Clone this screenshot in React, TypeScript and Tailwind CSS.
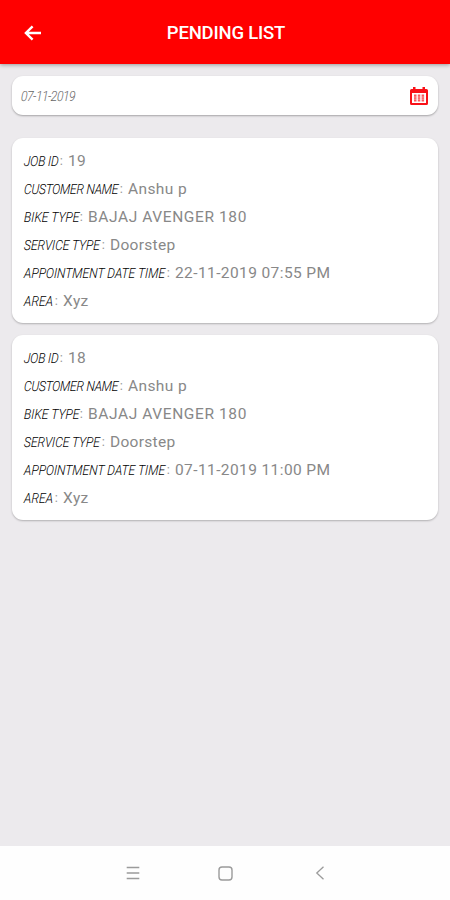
type Job = { id: string; time: string };

const jobs: Job[] = [
  { id: "19", time: "22-11-2019 07:55 PM" },
  { id: "18", time: "07-11-2019 11:00 PM" },
];

function Row({ label, value, slot, squeeze, spread }: { label: string; value: string; slot: string; squeeze: string; spread: string }) {
  return (
    <div className="flex h-7 items-center whitespace-nowrap leading-7">
      <div className={`flex shrink-0 ${slot}`}>
        <span className={`w-0 origin-left -skew-x-3 scale-x-[.87] text-[14px] font-light italic text-black ${squeeze}`}>{label}</span>
        <span className="ml-auto mr-[5px] text-[13px] text-[#999]">:</span>
      </div>
      <span className={`text-[15.5px] text-[#888] ${spread}`}>{value}</span>
    </div>
  );
}

function JobCard({ job }: { job: Job }) {
  return (
    <section className="h-[185px] rounded-[11px] bg-white pl-3 pt-[9px] shadow-[0_1px_2px_rgba(0,0,0,0.25)]">
      <Row label="JOB ID" value={job.id} slot="w-11" squeeze="tracking-[-0.2px]" spread="tracking-[0.4px]" />
      <Row label="CUSTOMER NAME" value="Anshu p" slot="w-26" squeeze="tracking-[-0.3px]" spread="tracking-[0.4px]" />
      <Row label="BIKE TYPE" value="BAJAJ AVENGER 180" slot="w-16" squeeze="tracking-[0px]" spread="tracking-[0.6px]" />
      <Row label="SERVICE TYPE" value="Doorstep" slot="w-[86px]" squeeze="tracking-[-0.1px]" spread="tracking-[0.3px]" />
      <Row label="APPOINTMENT DATE TIME" value={job.time} slot="w-[151px]" squeeze="tracking-[0px]" spread="tracking-[0.4px]" />
      <Row label="AREA" value="Xyz" slot="w-[39px]" squeeze="tracking-[0px]" spread="tracking-[0.4px]" />
    </section>
  );
}

export default function App() {
  return (
    <div className="flex h-[900px] w-[450px] flex-col overflow-hidden bg-[#eceaed] font-[Roboto,sans-serif]">
      <header className="grid h-16 shrink-0 grid-cols-[60px_1fr_60px] items-center bg-[#ff0000] pt-[2px] shadow-[0_1px_4px_rgba(0,0,0,0.35)]">
        <svg className="ml-6" width="18" height="16" viewBox="0 0 18 16" fill="none" stroke="white" strokeWidth="2.4">
          <path d="M8.6 1.3 1.9 8l6.7 6.7M2 8h15" />
        </svg>
        <h1 className="w-[332px] pt-[2px] text-center text-[18.5px] font-medium tracking-[-0.2px] text-white">PENDING LIST</h1>
      </header>
      <main className="flex flex-1 flex-col px-3 pt-3">
        <div className="flex h-[39px] shrink-0 items-center justify-between rounded-[11px] bg-white pl-[9px] pr-[10px] shadow-[0_1px_2px_rgba(0,0,0,0.3)]">
          <span className="origin-left -skew-x-3 scale-x-[.87] pt-[1px] text-[14px] font-light italic tracking-[-0.6px] text-[#666]">07-11-2019</span>
          <svg width="18" height="20" viewBox="0 0 18 20">
            <path fill="#f91118" fillRule="evenodd" d="M1.5 3H3V1h2.5v2h7V1H15v2h1.500q1.500 0 1.500 1.500v13q0 1.500-1.500 1.500h-15Q0 19 0 17.500v-13Q0 3 1.500 3ZM2 7v10h14V7Z" />
            <path fill="#f91118" fillOpacity=".7" d="M4 8.500h2.500v7H4zm3.800 0h2.500v7H7.800zm3.800 0h2.500v7h-2.500z" />
            <path stroke="#fff" strokeOpacity=".5" strokeWidth=".8" d="M4 11h10.200M4 13.200h10.200" />
          </svg>
        </div>
        <div className="mt-[23px] flex flex-col gap-3">
          {jobs.map((job) => <JobCard key={job.id} job={job} />)}
        </div>
      </main>
      <nav className="flex h-[54px] shrink-0 items-center bg-[#fefefe] pl-[126px] text-[#9b9b9b]">
        <svg width="14" height="14" viewBox="0 0 14 14" fill="none" stroke="currentColor" strokeWidth="1.3"><path d="M.7 1.5h12.6M.7 7h12.6M.7 12.5h12.6" /></svg>
        <svg className="ml-[78px]" width="15" height="15" viewBox="0 0 15 15" fill="none" stroke="currentColor" strokeWidth="1.4"><rect x="1" y="1" width="13" height="13" rx="3" /></svg>
        <svg className="ml-[82px]" width="10" height="14" viewBox="0 0 10 14" fill="none" stroke="currentColor" strokeWidth="1.3"><path d="M8.5.8 1.8 7l6.7 6.2" /></svg>
      </nav>
    </div>
  );
}
